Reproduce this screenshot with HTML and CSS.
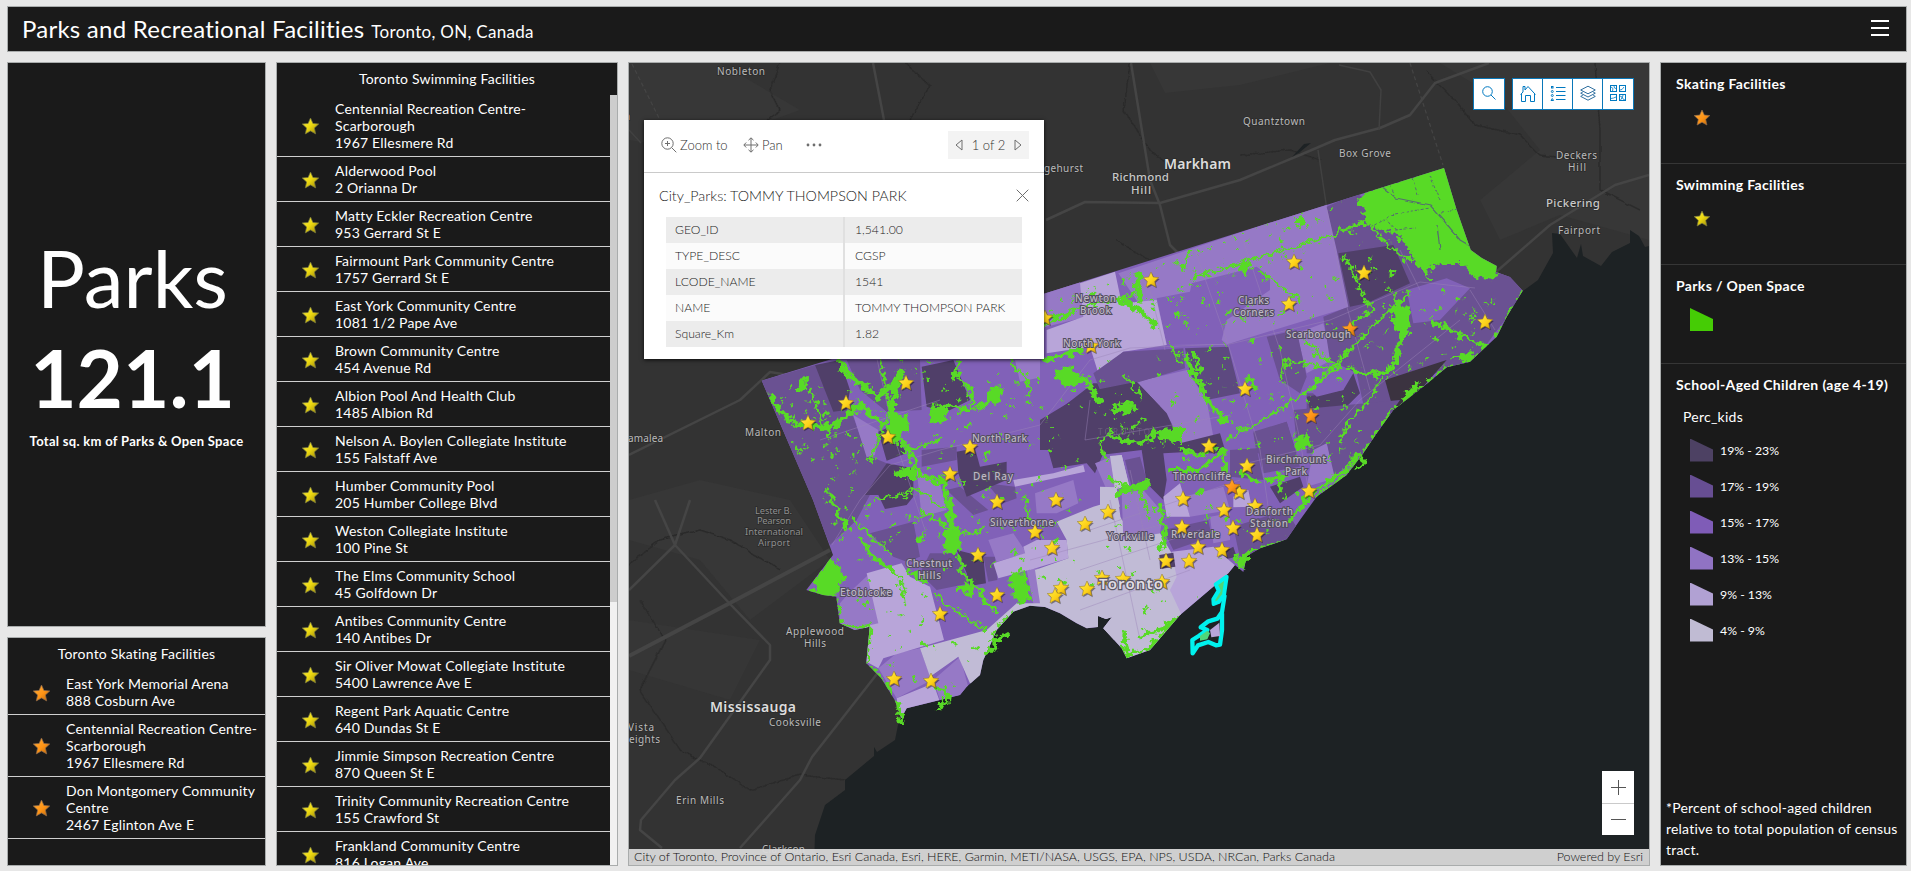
FILE: index.html
```html
<!DOCTYPE html>
<html lang="en">
<head>
<meta charset="utf-8">
<title>Parks and Recreational Facilities</title>
<link rel="stylesheet" href="styles.css">
</head>
<body>
<svg class="defs" width="0" height="0" aria-hidden="true">
  <defs>
    <linearGradient id="gy" x1="0" y1="0" x2="1" y2="1"><stop offset="0" stop-color="#f7ec4a"/><stop offset=".5" stop-color="#ecd810"/><stop offset="1" stop-color="#94800a"/></linearGradient>
    <linearGradient id="gm" x1="0" y1="0" x2="1" y2="1"><stop offset="0" stop-color="#fff04a"/><stop offset=".6" stop-color="#fdd017"/><stop offset="1" stop-color="#c08a10"/></linearGradient>
    <linearGradient id="go" x1="0" y1="0" x2="1" y2="1"><stop offset="0" stop-color="#ffb03c"/><stop offset=".55" stop-color="#ff9416"/><stop offset="1" stop-color="#b86408"/></linearGradient>
    <path id="starpath" d="M0-8 2.3-2.9 7.8-2.4 3.7 1.4 4.9 7 0 4.2-4.9 7-3.7 1.4-7.8-2.4-2.3-2.9Z"/>
    <g id="ys"><use href="#starpath" fill="url(#gy)" stroke="#77773c" stroke-width=".7"/></g>
    <g id="os"><use href="#starpath" fill="url(#go)" stroke="#8f6a4a" stroke-width=".7"/></g>
    <g id="my"><use href="#starpath" x="1" y="1.3" fill="#000" opacity=".4"/><use href="#starpath" fill="url(#gm)" stroke="#8f7426" stroke-width=".5"/></g>
    <g id="mo"><use href="#starpath" x="1" y="1.3" fill="#000" opacity=".4"/><use href="#starpath" fill="url(#go)" stroke="#9a6426" stroke-width=".5"/></g>
  </defs>
</svg>
<div class="dashboard">
  <header class="panel header">
    <h1>Parks and Recreational Facilities</h1><span class="subtitle">Toronto, ON, Canada</span>
    <svg class="menu" width="18" height="17" viewBox="0 0 18 17"><path d="M0 1h18M0 8h18M0 15h18" stroke="#fff" stroke-width="2"/></svg>
  </header>
  <main class="body">
    <div class="col-left">
      <section class="panel indicator">
        <div class="big">Parks</div>
        <div class="big bold">121.1</div>
        <div class="caption">Total sq. km of Parks &amp; Open Space</div>
      </section>
      <section class="panel list skating">
        <h2>Toronto Skating Facilities</h2>
        <ul>
          <li><svg viewBox="-9 -9 18 18"><use href="#os"/></svg><p>East York Memorial Arena<br>888 Cosburn Ave</p></li>
          <li><svg viewBox="-9 -9 18 18"><use href="#os"/></svg><p>Centennial Recreation Centre-<br>Scarborough<br>1967 Ellesmere Rd</p></li>
          <li><svg viewBox="-9 -9 18 18"><use href="#os"/></svg><p>Don Montgomery Community<br>Centre<br>2467 Eglinton Ave E</p></li>
        </ul>
      </section>
    </div>
    <section class="panel list swimming">
      <h2>Toronto Swimming Facilities</h2>
      <div class="scroll">
        <ul>
          <li><svg viewBox="-9 -9 18 18"><use href="#ys"/></svg><p>Centennial Recreation Centre-<br>Scarborough<br>1967 Ellesmere Rd</p></li>
          <li><svg viewBox="-9 -9 18 18"><use href="#ys"/></svg><p>Alderwood Pool<br>2 Orianna Dr</p></li>
          <li><svg viewBox="-9 -9 18 18"><use href="#ys"/></svg><p>Matty Eckler Recreation Centre<br>953 Gerrard St E</p></li>
          <li><svg viewBox="-9 -9 18 18"><use href="#ys"/></svg><p>Fairmount Park Community Centre<br>1757 Gerrard St E</p></li>
          <li><svg viewBox="-9 -9 18 18"><use href="#ys"/></svg><p>East York Community Centre<br>1081 1/2 Pape Ave</p></li>
          <li><svg viewBox="-9 -9 18 18"><use href="#ys"/></svg><p>Brown Community Centre<br>454 Avenue Rd</p></li>
          <li><svg viewBox="-9 -9 18 18"><use href="#ys"/></svg><p>Albion Pool And Health Club<br>1485 Albion Rd</p></li>
          <li><svg viewBox="-9 -9 18 18"><use href="#ys"/></svg><p>Nelson A. Boylen Collegiate Institute<br>155 Falstaff Ave</p></li>
          <li><svg viewBox="-9 -9 18 18"><use href="#ys"/></svg><p>Humber Community Pool<br>205 Humber College Blvd</p></li>
          <li><svg viewBox="-9 -9 18 18"><use href="#ys"/></svg><p>Weston Collegiate Institute<br>100 Pine St</p></li>
          <li><svg viewBox="-9 -9 18 18"><use href="#ys"/></svg><p>The Elms Community School<br>45 Golfdown Dr</p></li>
          <li><svg viewBox="-9 -9 18 18"><use href="#ys"/></svg><p>Antibes Community Centre<br>140 Antibes Dr</p></li>
          <li><svg viewBox="-9 -9 18 18"><use href="#ys"/></svg><p>Sir Oliver Mowat Collegiate Institute<br>5400 Lawrence Ave E</p></li>
          <li><svg viewBox="-9 -9 18 18"><use href="#ys"/></svg><p>Regent Park Aquatic Centre<br>640 Dundas St E</p></li>
          <li><svg viewBox="-9 -9 18 18"><use href="#ys"/></svg><p>Jimmie Simpson Recreation Centre<br>870 Queen St E</p></li>
          <li><svg viewBox="-9 -9 18 18"><use href="#ys"/></svg><p>Trinity Community Recreation Centre<br>155 Crawford St</p></li>
          <li><svg viewBox="-9 -9 18 18"><use href="#ys"/></svg><p>Frankland Community Centre<br>816 Logan Ave</p></li>
        </ul>
        <div class="track"><div class="thumb"></div></div>
      </div>
    </section>
    <section class="panel map">
      <svg class="canvas" viewBox="629 63 1020 802" width="1020" height="802">
        <defs>
          <filter id="rough" x="-5%" y="-5%" width="110%" height="110%"><feTurbulence type="fractalNoise" baseFrequency=".16" numOctaves="3" seed="4"/><feDisplacementMap in="SourceGraphic" scale="12" xChannelSelector="R" yChannelSelector="G"/></filter>
          <filter id="edge" x="-5%" y="-5%" width="110%" height="110%"><feTurbulence type="fractalNoise" baseFrequency=".1" numOctaves="2" seed="9"/><feDisplacementMap in="SourceGraphic" scale="4" xChannelSelector="R" yChannelSelector="G"/></filter>
          <path id="cityshape" d="M761.7 380.7 1040 295 1444 168 1456.7 210 1470.7 250 1481.7 258 1496.7 266 1496 272 1510 277 1522.7 290.7 1506.7 316.7 1496.7 336.7 1470 361.7 1446.7 367.3 1423.3 386.7 1393.3 410 1376.7 433.3 1363.3 453.3 1346.7 475 1316.7 496.7 1300 520 1286.7 539.3 1260 548.3 1247 556 1243.3 572 1235 565 1228.3 573.3 1213.3 586.7 1180 615 1150 650 1126.7 658.3 1121.7 648.3 1103.3 628.3 1112 617 1106 619 1098 616 1098 627 1086.7 628.3 1076.7 623.3 1060 613.3 1045 607 1030 605.7 1013.3 611.7 996.7 630 988 650 983.3 660 980 675 966.7 686.7 960 695 940 700 906.7 708.3 901.3 718.3 894.7 700 881.3 678.3 866.3 663.3 869.7 626.7 854.7 630 839.7 623.3 836.3 596.7 823 595 806.3 590 833 555 813 500Z"/>
          <clipPath id="city"><use href="#cityshape"/></clipPath>
        </defs>
        <rect x="629" y="63" width="1020" height="802" fill="#333"/>
        <g fill="#373737"><path d="M629 63H720L800 110 690 150 629 140ZM1150 63H1330L1240 85 1165 93ZM1440 63H1649V240L1560 215 1500 240 1480 200 1540 150 1500 100ZM629 500 700 480 790 500 830 560 750 620 700 560 629 540Z"/><path d="M629 620 760 640 730 700 629 670Z" fill="#363636"/></g>
        <g fill="none" stroke="#2a2a2a" stroke-width="1.4" filter="url(#edge)">
          <path d="M629 565 660 540 700 530 730 540 780 570M640 600 665 640 640 690 680 750 720 770 750 790 800 775 845 780M780 62 770 90 780 110 768 120M1130 63 1124 110 1150 150 1175 170M1425 70 1450 95 1475 125 1520 135 1540 155 1580 160M1595 63 1600 130 1600 190 1640 210M1115 240 1150 260 1175 300M905 63 930 85 910 120M1240 155 1290 150 1320 160"/>
        </g>
        <g fill="none" stroke="#454545" stroke-linejoin="round">
          <path stroke-width="4" d="M629 656 730 603 830 550"/>
          <path stroke-width="2.5" d="M820 380 770 372 740 400 629 455M655 500 675 545 730 604 770 645 770 660 700 758 675 780 641 820 640 830 662 848M675 545 629 590M675 545 690 500M880 670 812 757 800 780 740 848M1046 220 1085 202 1160 203 1240 180 1300 155 1335 140 1380 128 1410 115 1435 83 1489 63M1131 63 1150 180 1160 205 1170 245 1180 255M1496 272 1550 225 1615 185 1649 175M873 63 884 120"/>
          <path stroke-width="1.5" stroke="#414141" d="M1339 65 1370 72 1381 90 1379 130M1318 150 1327 210M629 130 641 143"/>
          <path stroke-width="1.2" stroke-dasharray="4 3" d="M1410 63 1443 165M632 64 660 120"/>
        </g>
        <path fill="#1d2224" d="M1649 246 1645 247 1639 236 1630 230 1630 243 1612 252 1601 266 1583 256 1581 244 1577 258 1560 234 1552 233 1553 253 1538 280 1523 291 1440 330 1150 560 980 590 902 705 895 740 877 752 874 747 874 756 845 780 845 790 825 805 815 835 814 865H1649Z"/>
        <path fill="#1d2224" d="M1292 157 1304 144 1311 143 1300 152Z"/>

        <use href="#cityshape" fill="#8161b8"/>
        <g clip-path="url(#city)">
          <g transform="translate(740 340) scale(.33333)">
            <path fill="#6a5192" d="M65 122 225 75 340 230 380 345 440 370 350 540 270 615ZM320 60H540L545 210 440 215 360 150ZM545 330 650 320V360L545 380ZM620 450 660 440 745 510 700 525ZM390 580 520 545 540 650 500 665 460 650ZM570 640H650L690 730 590 750 540 700ZM730 650 765 650 772 720 745 725ZM1070 95 1150 60H1260V110L1080 155ZM740 430 825 440 830 475 790 490Z"/>
            <path fill="#503f69" d="M225 75 300 60 330 150 320 210 280 215ZM545 80 640 60 690 180 620 215 560 200ZM440 370 520 385V470L500 495 435 507 415 465 375 465ZM415 275 450 260 500 340 440 362ZM650 335 705 325 720 380 800 365V420L680 470 655 400ZM650 630 730 650 738 730 690 738 680 700ZM900 245 950 215 1060 130H1260V310L1090 340 1065 400 1040 370 940 385Z"/>
            <path fill="#9679c6" d="M340 225 415 270 405 345 380 352ZM530 390 600 430 620 510 545 530ZM745 600 820 580 860 640 770 665ZM300 790 330 755 390 700 418 850 340 875 300 850ZM885 460 1000 420 1015 490 950 520 890 520ZM825 60H960V100L840 125ZM1065 370 1115 350 1130 440 1100 450ZM415 985 470 940 540 925 575 1020 470 1075ZM580 1020 660 950 690 1060 600 1080ZM860 690 895 685 920 800 880 790Z"/>
            <path fill="#b8a5d9" d="M380 700 485 670 510 710 570 740 612 900 430 955 415 985 370 960V860L415 850ZM760 670 870 635 885 685 775 715ZM890 600 980 600 985 655 870 690 850 620ZM470 1075 580 1030 605 1100 480 1140ZM940 400 1030 375 1035 395 825 440 820 420Z"/>
            <path fill="#c1bbd6" d="M540 925 740 870 830 790 900 790 770 900 730 1040 690 1030 655 950 570 1010ZM950 545 1060 500 1110 485 1150 545 1170 600 1260 650V900L1090 900 970 840 880 800 900 790 885 690 985 655 980 600ZM1113 350 1145 345 1168 440 1125 445ZM1095 450 1125 445 1140 500 1090 500Z"/>
          </g>
          <g transform="translate(1040 160) scale(.33333)">
            <path fill="#9679c6" d="M235 340 860 130 930 440 555 555 380 555ZM0 400 120 365 140 470 0 505ZM290 665 440 630 500 720 520 830 430 860 380 760ZM770 520 850 490 875 600 800 640Z"/>
            <path fill="#8161b8" d="M455 370 650 320 690 350V390L560 480 545 540 560 553 380 555 350 415 450 395ZM0 590 150 580 175 650 130 690 0 780Z"/>
            <path fill="#b8a5d9" d="M120 370 225 335 245 430 350 420 380 555 250 575 175 640 150 560 20 580V510L130 470Z"/>
            <path fill="#6a5192" d="M860 140 950 100 1100 200 1290 250 1460 392 1290 620 1050 665 1060 760 980 780 950 640 870 600 850 470 925 440 890 270ZM680 530 770 510 800 650 780 700 720 660ZM160 640 250 575 430 565 435 625 200 695 180 690ZM640 820 740 785 770 880H650ZM800 700 920 700 850 880H800Z"/>
            <path fill="#5d4980" d="M435 565 565 560 600 700 500 720 450 640Z"/>
            <path fill="#503f69" d="M895 280 1060 255 1110 370 980 430 930 440ZM0 780 140 695 290 665 380 760 430 870H0ZM800 710 910 690 940 640 960 700 900 760 870 740 810 750ZM430 860 530 825 540 880H430Z"/>
            <path fill="#3b3340" d="M1035 660 1220 600 1150 680 1060 750Z"/>
            <path fill="#8161b8" d="M1100 390 1220 355 1290 385 1200 480 1120 490ZM860 650 910 640V690L830 710 800 680Z"/>
          </g>
          <g transform="translate(1100 400) scale(.33333)">
            <path fill="#6a5192" d="M460 95 560 65 600 200 490 220ZM580 30 900 0 790 160 700 230 680 130 590 130ZM400 380 560 330 600 400 420 475ZM190 390 325 360 335 410 220 450ZM390 150 470 145 490 240 390 230ZM75 180 120 170 140 240 95 260Z"/>
            <path fill="#503f69" d="M0 0H160L240 130 360 100 375 150 190 160 200 240 190 300 140 250 125 150 0 165ZM510 260 600 230 610 260 540 310ZM340 470 400 440 410 470 345 485Z"/>
            <path fill="#9679c6" d="M640 150 680 130 705 235 620 260ZM65 280 130 270 190 340 180 400 70 420ZM250 290 370 260 390 330 270 350ZM330 350 390 340 390 420 340 430Z"/>
            <path fill="#b8a5d9" d="M190 290 240 250 270 350 200 350ZM400 290 445 270 455 320 400 322ZM215 455 340 440 410 500 240 650 205 560Z"/>
            <path fill="#c1bbd6" d="M30 168 65 165 88 258 45 268ZM0 260 50 262 70 420 180 400 215 460 230 530 210 570 245 645 150 760 80 790 0 680Z"/>
            <path fill="#503f69" d="M178 465 220 458 226 500 180 507Z"/>
          </g>
          <g fill="none" stroke="#9b86b8" stroke-opacity=".45" stroke-width="1">
            <path d="M832 545 860 500 890 465 940 450 1040 425 1090 360 1130 348 1230 344 1330 320 1420 282 1475 288M875 350 895 440 925 530M1195 250 1230 350 1260 450 1270 520M1243 240 1280 350 1300 440 1310 500M1327 210 1345 300 1370 390M1400 250 1420 290M1470 290 1495 330M820 440 940 400M1150 290 1165 350M1090 400 1085 440 1230 415M1240 465 1320 445 1360 400 1460 320M1090 530 1240 480M1080 570 1200 530M1110 500 1140 640M1030 560 1160 525M1080 610 1190 570M1130 470 1150 560"/>
          </g>
          <g fill="#59da28" filter="url(#rough)">
            <!-- large open spaces -->
            <path d="M1357 200 1365 192 1448 162 1460 210 1478 252 1503 266 1494 280 1474 276 1463 264 1440 264 1422 272 1410 252 1400 234 1385 230 1369 226Z"/>
            <path d="M830 556 841 568 844 582 835 596 815 597 816 580ZM1010 575 1026 572 1032 601 1020 604 1012 596ZM928 407 948 404 946 420 932 424ZM988 388 1002 386 1000 405 986 404ZM797 379 807 378 806 391 798 390ZM1055 374 1070 365 1086 380 1077 386 1062 384ZM1108 410 1126 401 1135 405 1130 415ZM1294 436 1309 435 1312 447 1297 451ZM1158 430 1182 426 1182 443 1160 440ZM890 416 908 414 909 428 895 446 886 436ZM892 470 915 466 915 480 900 480ZM945 530 958 528 961 550 944 556ZM958 585 974 584 972 594 958 592ZM1116 488 1150 480 1148 488 1118 496ZM1296 217 1304 214 1303 224 1294 223ZM1390 305 1410 310 1408 330 1396 332ZM1243 260 1250 262 1247 275 1240 272ZM1175 265 1187 263 1186 270ZM926 530 922 545 916 540ZM905 572 915 570 924 576 928 583 915 580ZM1450 358 1474 350 1472 362ZM1408 388 1420 382 1416 392 1398 408ZM1235 555 1250 552 1243 570Z"/>
            <g fill="none" stroke="#59da28" stroke-linejoin="round" stroke-linecap="round">
              <path stroke-width="5.5" d="M840 362 848 375 862 385 878 398 892 385 902 370M902 372 892 400 893 420M942 478 948 500 952 520 948 550M770 395 783 415 800 425 830 428 860 405 884 425M1047 360 1080 350M1055 372 1085 380 1096 396 1100 402M1120 300 1140 310 1155 325M1138 275 1140 300M1396 300 1408 325 1398 345 1394 368 1376 374M1186 355 1194 375 1204 395 1215 410 1226 420M1250 380 1255 390"/>
              <path stroke-width="4" d="M958 556 963 575 975 585 985 600 996 612M828 490 835 508 845 525 848 528M862 540 872 556 885 565 897 574M990 402 970 410 945 405M960 360 955 375 970 390 972 402M1194 354 1200 372M1376 374 1350 370M1434 322 1450 330 1470 340 1485 345M1158 430 1150 440 1130 442 1110 436M1180 448 1200 455 1215 448M1170 470 1200 470 1225 450M1222 452 1226 470M1160 505 1165 535 1160 550M1240 473 1258 482M1268 480 1285 475 1278 490M1390 420 1376 435M1356 455 1345 470 1330 480 1310 495 1290 520M1116 494 1132 489 1148 484M902 440 912 455 918 472 942 485M1124 632 1128 655 1150 648 1180 616M1140 636 1165 628 1176 618"/>
              <path stroke-width="2.5" d="M1192 278 1260 257 1330 236 1366 222 1380 238 1410 262M1225 440 1260 422 1310 390 1350 350 1390 310 1410 292M1105 460 1100 440 1112 430M855 520 870 535 890 555M1025 495 1030 518M880 360 890 410 870 460M1260 270 1285 290 1300 300M1345 255 1360 290 1372 310 1350 325M1140 290 1120 300 1090 305 1050 320M1040 325 1070 315M1305 340 1320 355 1340 368M1170 345 1180 362M1125 375 1135 390 1140 398M810 390 830 440M875 500 920 490 945 510M920 510 960 535 985 530M900 580 905 605M955 610 985 630M935 595 960 615M1280 380 1285 360 1340 370M1340 440 1350 420 1370 400 1380 380M1185 265 1190 250M1110 480 1140 490 1150 520M1400 255 1420 262 1430 280M940 440 900 452M1010 360 1030 385 1028 395"/>
            </g>
            <!-- neighbourhood parks -->
            <g fill="none" stroke="#59da28" stroke-width="3.4" stroke-dasharray="3 21 2 17 5 29 3 13 2 25">
              <path d="M790 385 880 460 800 450 900 530 820 500 870 580 850 610 960 560 900 490 1000 480 960 410 1050 400 1010 440 1080 460 1000 500 1060 540 980 560 1090 590 1130 500 1180 520 1110 560 1170 600 1120 620M880 590 950 600 920 650 980 640 950 690 890 670 900 640M1050 310 1130 280 1170 330 1200 260 1240 330 1280 240 1330 300 1350 230 1390 290 1400 240 1450 300 1500 300 1440 340 1380 330 1340 380 1300 340 1260 360 1230 400 1290 420 1330 400 1370 420 1330 460 1280 460 1240 430 1200 410 1180 480 1240 520 1300 490 1260 540 1200 500 1220 560M1100 380 1150 420 1100 440 1180 400 1150 360 1250 340 1310 380"/>
              <path stroke-width="2.4" stroke-dasharray="2 15 3 11 2 19" d="M1150 300 1220 300 1180 320 1230 360 1200 390 1270 400 1320 350 1270 320 1370 260 1360 300 1420 310 1480 310 1500 290M820 385 840 450 790 440 860 480M900 360 930 380 960 400 1000 420 1040 380 1010 360 930 440 990 460 1040 490 1080 500 1020 560 1080 560M1270 480 1330 440 1360 440 1300 470M870 610 930 620 880 640M1180 290 1250 240 1320 220 1340 200"/>
              <path stroke-width="2" stroke-dasharray="2 9 3 14 1.500 7" d="M1060 300 1180 260 1290 215 1330 240 1220 280 1170 290 1190 330 1300 310 1340 330 1390 350 1440 310 1490 320 1450 350 1340 400 1290 400 1220 380 1240 450 1310 430 1350 430M1370 270 1400 300 1380 280M850 390 870 420 920 380 930 360M780 400 860 440 850 500M1020 370 1000 440 1060 440 1040 410M960 430 930 470 990 490 970 520 1020 530M1110 360 1060 400 1120 420 1150 450 1190 430M860 560 920 520 880 510"/>
            </g>
            <path fill="none" stroke="#59da28" stroke-width="3" d="M1525 290 1506.7 318 1496.7 338 1470 361.7 1446.7 367.3 1423.3 386.7 1393.3 410 1376.7 433.3 1363.3 453.3 1346.7 475 1316.7 496.7M1286 540 1247 552M806 590 823 596 836 598 840 624 855 630 870 625 867 663 882 678 900 716M1013 611 996 630 992 650M940 700 950 705 946 690M1200 600 1155 645 1127 657 1122 645M1350 455 1360 465"/>
          </g>
          <!-- rail and road cuts inside the large northeast park -->
          <g fill="none" stroke="#54706e" stroke-width="1.2" filter="url(#edge)"><path d="M1380 185 1396 198 1430 205 1445 222 1460 240 1472 247M1437 225 1440 250"/><path stroke-dasharray="3 2" stroke-width="1" d="M1370 228 1390 215 1430 208M1440 212 1460 210M1390 185 1395 195M1412 178 1418 195M1430 175 1440 200M1385 218 1395 230 1415 228"/></g>
        </g>
        <g fill="none" stroke="#59da28" stroke-width="3.5" filter="url(#rough)"><path d="M985 654 994 648 998 640 1008 634M996 645 990 638M936 688 946 690 948 702 940 706 942 697M902 722 898 704M1354 470 1364 462 1358 452M1243 570 1238 560 1250 558"/></g>
        <!-- selected park -->
        <g transform="translate(1100 400) scale(.33333)" filter="url(#edge)" stroke-linejoin="round">
          <path fill="#4fd67a" stroke="#00f2ee" stroke-width="12" d="M380 530 347 553 356 572 340 598 341 612 356 606 372 585Z"/>
          <path fill="none" stroke="#00f2ee" stroke-width="13" d="M374 585 366 636 352 656 325 664 302 682 322 690 296 708 277 720 278 760 294 736 325 726 348 736 360 734 366 690 366 640"/>
          <path fill="#4fd67a" d="M300 708 322 692 330 700 322 718 300 722Z"/>
          <path fill="#b8a5d9" d="M330 690 358 668 360 708 334 712Z"/>
        </g>

        <g class="lbl">
          <text x="717" y="75" textLength="48">Nobleton</text><text x="1243" y="125" textLength="62">Quantztown</text>
          <text x="1339" y="157" textLength="52">Box Grove</text><text x="1044" y="172" textLength="39">gehurst</text>
          <text x="1556" y="159" textLength="41">Deckers</text><text x="1568" y="171" textLength="18">Hill</text>
          <text x="1558" y="234" textLength="42">Fairport</text><text x="745" y="436" textLength="36">Malton</text>
          <text x="628" y="442" textLength="35">amalea</text><text x="624" y="120">n</text>
          <text x="786" y="635" textLength="58">Applewood</text><text x="804" y="647" textLength="22">Hills</text>
          <text x="769" y="726" textLength="52">Cooksville</text><text x="628" y="731" textLength="26">Vista</text><text x="629" y="743" textLength="31">eights</text>
          <text x="676" y="804" textLength="48">Erin Mills</text><text x="762" y="853" textLength="43">Clarkson</text>
        </g>
        <g class="lbl mid"><text x="1546" y="207" textLength="54">Pickering</text><text x="1112" y="181" textLength="57">Richmond</text><text x="1131" y="194" textLength="20">Hill</text></g>
        <g class="lbl faint"><text x="755" y="514" textLength="37">Lester B.</text><text x="757" y="524" textLength="34">Pearson</text><text x="745" y="535" textLength="58">International</text><text x="758" y="546" textLength="32">Airport</text></g>
        <g class="lbl large"><text x="1164" y="169" textLength="67">Markham</text><text x="710" y="712" textLength="86">Mississauga</text></g>

        <g>
          <use href="#my" x="1091" y="346"/><use href="#my" x="1045" y="318"/><use href="#my" x="1102" y="578"/><use href="#my" x="1123" y="579"/><use href="#my" x="1162" y="582"/><use href="#my" x="1255" y="506"/><use href="#mo" x="1350" y="329"/>
        </g>
        <g class="lbl place">
          <text x="1075" y="302" textLength="41">Newton</text><text x="1080" y="314" textLength="31">Brook</text><text x="1063" y="347" textLength="57">North York</text>
          <text x="1238" y="304" textLength="31">Clarks</text><text x="1233" y="316" textLength="41">Corners</text><text x="1286" y="338" textLength="65">Scarborough</text>
          <text x="972" y="442" textLength="55">North Park</text><text x="973" y="480" textLength="40">Del Ray</text><text x="990" y="526" textLength="64">Silverthorne</text>
          <text x="906" y="567" textLength="46">Chestnut</text><text x="918" y="579" textLength="23">Hills</text><text x="840" y="596" textLength="52">Etobicoke</text>
          <text x="1107" y="540" textLength="47">Yorkville</text><text x="1171" y="538" textLength="49">Riverdale</text><text x="1173" y="480" textLength="58">Thorncliffe</text>
          <text x="1266" y="463" textLength="60">Birchmount</text><text x="1285" y="475" textLength="22">Park</text><text x="1246" y="515" textLength="47">Danforth</text><text x="1250" y="527" textLength="38">Station</text>
        </g>
        <text class="ghost" x="1098" y="435" textLength="52">TORONTO</text>
        <text class="capital" x="1099" y="589" textLength="64">Toronto</text>

        <g>
          <use href="#my" x="906" y="383"/><use href="#my" x="846" y="403"/><use href="#my" x="808" y="423"/><use href="#my" x="888" y="437"/><use href="#my" x="970" y="447"/><use href="#my" x="950" y="474"/><use href="#my" x="997" y="502"/><use href="#my" x="1056" y="500"/><use href="#my" x="1108" y="512"/><use href="#my" x="1085" y="524"/><use href="#my" x="1035" y="532"/><use href="#my" x="1052" y="548"/><use href="#my" x="978" y="555"/><use href="#my" x="997" y="595"/><use href="#my" x="940" y="614"/><use href="#my" x="1061" y="588"/><use href="#my" x="1055" y="596"/><use href="#my" x="1087" y="589"/><use href="#my" x="894" y="679"/><use href="#my" x="931" y="681"/>
          <use href="#my" x="1151" y="280"/><use href="#my" x="1294" y="262"/><use href="#my" x="1364" y="273"/><use href="#my" x="1289" y="304"/><use href="#my" x="1485" y="322"/><use href="#my" x="1245" y="389"/><use href="#my" x="1209" y="446"/><use href="#my" x="1247" y="466"/><use href="#my" x="1183" y="499"/><use href="#my" x="1224" y="510"/><use href="#my" x="1239" y="492"/><use href="#my" x="1309" y="491"/><use href="#my" x="1182" y="527"/><use href="#my" x="1233" y="528"/><use href="#my" x="1257" y="535"/><use href="#my" x="1198" y="547"/><use href="#my" x="1222" y="550"/><use href="#my" x="1189" y="561"/><use href="#my" x="1166" y="561"/>
          <use href="#mo" x="1311" y="416"/><use href="#mo" x="1232" y="487"/>
        </g>
      </svg>

      <div class="popup">
        <div class="actions">
          <svg width="16" height="16" viewBox="0 0 16 16"><g fill="none" stroke="#6e6e6e"><circle cx="6.5" cy="6.5" r="5.7"/><path d="M10.8 10.8 15.3 15.3M6.5 4v5M4 6.5h5"/></g></svg><span class="zt">Zoom to</span>
          <svg class="pan" width="16" height="16" viewBox="0 0 16 16"><path fill="none" stroke="#6e6e6e" d="M1 8h14M8 1v14M5.5 3.2 8 .8l2.5 2.4M5.5 12.8 8 15.2l2.5-2.4M3.2 5.5.8 8l2.4 2.5M12.8 5.5 15.2 8l-2.4 2.5"/></svg><span class="pn">Pan</span>
          <svg class="dots" width="16" height="4" viewBox="0 0 16 4"><g fill="#6e6e6e"><circle cx="2" cy="2" r="1.4"/><circle cx="8" cy="2" r="1.4"/><circle cx="14" cy="2" r="1.4"/></g></svg>
          <div class="pager"><svg width="8" height="12" viewBox="0 0 8 12"><path d="M7 1v10L1 6Z" fill="none" stroke="#6e6e6e"/></svg><span>1 of 2</span><svg width="8" height="12" viewBox="0 0 8 12"><path d="M1 1v10L7 6Z" fill="none" stroke="#6e6e6e"/></svg></div>
        </div>
        <div class="ptitle"><span>City_Parks: TOMMY THOMPSON PARK</span><svg width="13" height="13" viewBox="0 0 13 13"><path d="M.7.7 12.3 12.3M12.3.7.7 12.3" stroke="#6e6e6e" fill="none"/></svg></div>
        <dl class="attrs">
          <dt>GEO_ID</dt><dd>1,541.00</dd>
          <dt>TYPE_DESC</dt><dd>CGSP</dd>
          <dt>LCODE_NAME</dt><dd>1541</dd>
          <dt>NAME</dt><dd>TOMMY THOMPSON PARK</dd>
          <dt>Square_Km</dt><dd>1.82</dd>
        </dl>
      </div>

      <div class="tools">
        <div class="btns"><button><svg width="14" height="14" viewBox="0 0 14 14"><g fill="none" stroke="#0079c1"><circle cx="5.5" cy="5.5" r="4.8"/><path d="M9 9l4.5 4.5"/></g></svg></button></div>
        <div class="btns">
          <button><svg width="16" height="17" viewBox="0 0 16 17"><path fill="none" stroke="#0079c1" d="M.6 9.500 3 7V1.500h2V5l3-3.500 7.400 8M1.500 9v7.500h4v-6h5v6h4V9"/></svg></button>
          <button><svg width="16" height="17" viewBox="0 0 16 17"><g fill="none" stroke="#0079c1"><path d="M6 2.5h9.500M6 6.500h9.500M6 10.500h9.500M6 14.500h9.500"/><rect x="1.500" y="1.500" width="1.500" height="1.500"/><circle cx="2.300" cy="6.500" r="1"/><circle cx="2.300" cy="10.500" r="1"/><path d="M1 15.500 2.300 13.500 3.600 15.500Z"/></g></svg></button>
          <button><svg width="16" height="17" viewBox="0 0 16 17"><path fill="none" stroke="#2f6f9f" d="M8 1.200 15.300 5 8 8.800.7 5ZM2.800 7 .7 8.200 8 12l7.300-3.800L13.200 7M2.800 10.200.7 11.400 8 15.200l7.300-3.800-2.100-1.200"/></svg></button>
          <button><svg width="16" height="17" viewBox="0 0 16 17"><g fill="none" stroke="#0079c1"><rect x=".5" y=".5" width="6" height="6"/><rect x="9.500" y=".5" width="6" height="6"/><rect x=".5" y="9.500" width="6" height="6"/><rect x="9.500" y="9.500" width="6" height="6"/><path stroke-width=".8" d="M1 2l2 1.500L2.500 6M4 1l.5 2L6 3.500M10 5l2-.5L14 2M1 13.500l2.500-.5L6 12M10 11l2 1 1 2 2 1M13 10l-.5 2L10.500 15"/></g></svg></button>
        </div>
      </div>
      <div class="zoomer">
        <button><svg width="15" height="15" viewBox="0 0 15 15"><path d="M7.500 0v15M0 7.500h15" stroke="#555"/></svg></button>
        <button><svg width="15" height="15" viewBox="0 0 15 15"><path d="M0 7.500h15" stroke="#555"/></svg></button>
      </div>
      <div class="credit"><span class="src">City of Toronto, Province of Ontario, Esri Canada, Esri, HERE, Garmin, METI/NASA, USGS, EPA, NPS, USDA, NRCan, Parks Canada</span><span class="esri">Powered by Esri</span></div>
    </section>
    <aside class="panel legend">
      <div class="item"><h3>Skating Facilities</h3><svg class="sym" viewBox="-9 -9 18 18"><use href="#os"/></svg></div>
      <div class="item"><h3>Swimming Facilities</h3><svg class="sym" viewBox="-9 -9 18 18"><use href="#ys"/></svg></div>
      <div class="item"><h3>Parks / Open Space</h3><i class="sw green"></i></div>
      <div class="item last"><h3>School-Aged Children (age 4-19)</h3>
        <h4>Perc_kids</h4>
        <ul class="classes">
          <li><i class="sw c1"></i>19% - 23%</li><li><i class="sw c2"></i>17% - 19%</li><li><i class="sw c3"></i>15% - 17%</li>
          <li><i class="sw c4"></i>13% - 15%</li><li><i class="sw c5"></i>9% - 13%</li><li><i class="sw c6"></i>4% - 9%</li>
        </ul>
      </div>
      <p class="note">*Percent of school-aged children relative to total population of census tract.</p>
    </aside>
  </main>
</div>
</body>
</html>
```
FILE: styles.css
```css
* { box-sizing: border-box; margin: 0; padding: 0; }
html, body { height: 100%; overflow: hidden; }
body { background: #e7e7e7; color: #fff; font-family: Lato, "Open Sans", sans-serif; font-size: 14px; }
ul { list-style: none; }
.defs { position: absolute; }
.dashboard { height: 871px; padding: 6px 4px 5px 7px; display: flex; flex-direction: column; gap: 10px; }
.panel { background: #1a1a1a; border: 1px solid #a9acac; overflow: hidden; }
.header { height: 46px; flex: none; display: flex; align-items: baseline; padding: 7px 17px 0 14px; }
.header h1 { font-size: 24px; line-height: 30px; font-weight: 400; letter-spacing: .24px; }
.subtitle { font-size: 17px; margin-left: 7px; letter-spacing: .3px; }
.menu { margin-left: auto; align-self: flex-start; margin-top: 6px; }
.body { flex: 1; min-height: 0; display: grid; grid-template-columns: 259px 342px 1022px 247px; column-gap: 10px; }
.col-left { display: grid; grid-template-rows: 565px 229px; row-gap: 10px; min-height: 0; }
.indicator { text-align: center; padding-top: 164px; }
.big { font-size: 80px; line-height: 100px; padding-right: 8px; }
.bold { font-weight: 700; }
.caption { font-size: 13px; font-weight: 700; line-height: 20px; margin-top: 4px; letter-spacing: .3px; }
.list { display: flex; flex-direction: column; letter-spacing: .2px; }
.list h2 { font-size: 14px; font-weight: 400; text-align: center; line-height: 31px; height: 32px; flex: none; }
.list li { display: flex; align-items: center; border-bottom: 1px solid #cfcfcf; padding: 5px 0 5px 24px; line-height: 17px; white-space: nowrap; }
.list li svg { width: 19px; height: 19px; flex: none; margin-right: 15px; margin-top: 2px; }
.scroll { display: flex; flex: 1; min-height: 0; overflow: hidden; }
.scroll ul { flex: 1; }
.track { width: 7px; background: #f1f1f1; }
.thumb { height: 507px; background: #cdcdcd; }
.map { position: relative; }
.canvas { display: block; }
.lbl text, .ghost, .capital { font-family: "Noto Sans", sans-serif; }
.lbl { font-size: 10px; fill: #bababa; stroke: #2b2b2b; stroke-width: 1.5px; paint-order: stroke; }
.mid { font-size: 11.5px; font-weight: 500; fill: #c8c8c8; }
.faint { font-size: 9.5px; fill: #8e8e8e; }
.large { font-size: 14px; font-weight: 600; fill: #dcdcdc; }
.place { fill: #bdb6c4; stroke: #534d60; stroke-width: 2px; font-weight: 500; }
.ghost { font-size: 8px; fill: #7a7188; opacity: .6; }
.capital { font-size: 15px; font-weight: 600; fill: #e0dde4; stroke: #5c5864; stroke-width: 2.5px; paint-order: stroke; }
.popup { position: absolute; left: 15px; top: 57px; width: 400px; height: 239px; background: #fff; color: #1c1c1c; box-shadow: 0 1px 4px rgba(0,0,0,.8); font-weight: 300; }
.actions { height: 53px; border-bottom: 1px solid #cacaca; display: flex; align-items: center; padding: 0 15px 2px 17px; color: #303030; font-size: 13px; }
.zt { margin-left: 3px; width: 46px; white-space: nowrap; }
.pan { margin-left: 17px; }
.pn { margin-left: 3px; width: 20px; }
.dots { margin-left: 24px; }
.pager { margin-left: auto; width: 81px; height: 28px; background: #f3f3f3; display: flex; align-items: center; justify-content: space-between; padding: 0 7px; font-size: 13px; }
.ptitle { display: flex; justify-content: space-between; align-items: center; height: 44px; padding: 0 15px 0 15px; font-size: 14.3px; }
.attrs { margin-left: 22px; width: 356px; display: grid; grid-template-columns: 179px 177px; grid-auto-rows: 26px; font-size: 12.2px; line-height: 26px; }
.attrs dt { padding-left: 9px; border-right: 2px solid #e0e0e0; }
.attrs dd { padding-left: 10px; white-space: nowrap; }
.attrs > :nth-child(4n+1), .attrs > :nth-child(4n+2) { background: #ececec; }
.attrs > :nth-child(4n+3), .attrs > :nth-child(4n) { background: #fbfbfb; }
.tools { position: absolute; right: 15px; top: 15px; display: flex; gap: 7px; }
.btns { display: flex; border: 1px solid #0a77b8; background: #0a77b8; gap: 1px; }
.btns button { width: 29px; height: 30px; background: #fff; border: 0; display: grid; place-items: center; padding-bottom: 2px; }
.btns:first-child button { width: 30px; }
.btns:last-child button:last-child { width: 30px; }
.zoomer { position: absolute; right: 15px; bottom: 30px; display: grid; grid-template-rows: 32px 31px; gap: 1px; background: #cacaca; }
.zoomer button { width: 32px; background: #fff; border: 0; display: grid; place-items: center; }
.credit { position: absolute; left: 0; right: 0; bottom: 0; height: 16px; background: rgba(217,217,217,.95); color: #111; display: flex; justify-content: space-between; padding: 0 6px 0 5px; font-size: 12.5px; line-height: 16px; white-space: nowrap; font-weight: 300; }
.legend { display: flex; flex-direction: column; }
.item { height: 101px; border-bottom: 1px solid #363636; padding: 11px 0 0 15px; flex: none; }
.item:nth-child(3) { height: 99px; }
.item.last { height: auto; border: 0; }
.item h3 { font-size: 14px; line-height: 20px; font-weight: 700; white-space: nowrap; letter-spacing: .36px; }
.sym { display: block; width: 18px; height: 18px; margin: 15px 0 0 17px; }
.sw { display: block; width: 23px; height: 23px; clip-path: polygon(0 0, 100% 48%, 100% 100%, 0 100%); }
.green { background: #45cc05; margin: 12px 0 0 14px; }
.item h4 { font-size: 14px; font-weight: 400; line-height: 20px; margin: 12px 0 0 7px; letter-spacing: .25px; }
.classes { padding: 11px 0 0 14px; }
.classes li { display: flex; align-items: center; gap: 7px; height: 36px; padding-bottom: 12px; font-size: 12.3px; white-space: nowrap; }
.c1 { background: #4d4163; } .c2 { background: #674e93; } .c3 { background: #7f5cb7; }
.c4 { background: #9073c3; } .c5 { background: #b1a1d3; } .c6 { background: #c0bbd3; }
.note { margin-top: auto; padding: 0 2px 5px 5px; font-size: 14px; line-height: 21px; letter-spacing: .2px; }
```
